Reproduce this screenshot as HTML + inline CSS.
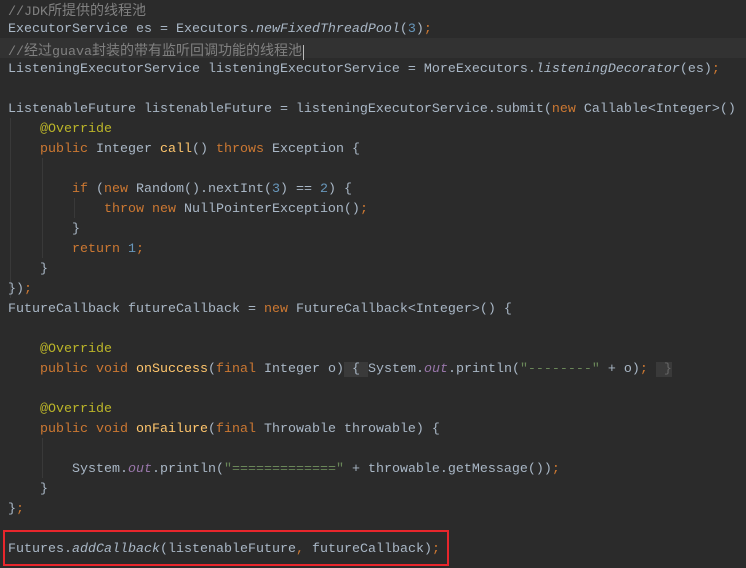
<!DOCTYPE html>
<html><head><meta charset="utf-8"><style>
html,body{margin:0;padding:0;width:746px;height:568px;overflow:hidden;background:#2b2b2b;}
.c{position:relative;width:746px;height:568px;font-family:"Liberation Mono","Noto Sans CJK SC",monospace;font-size:13.33px;color:#a9b7c6;}
.l{position:absolute;left:8px;height:20px;line-height:20px;white-space:pre;margin-top:2px}
.k{color:#cc7832}.cm{color:#808080}.n{color:#6897bb}.s{color:#6a8759}.a{color:#bbb529}.m{color:#ffc66d}.f{color:#9876aa;font-style:italic}.i{font-style:italic}
.cj{font-family:"Noto Sans CJK SC",sans-serif;font-size:14px;}
.g{position:absolute;width:1px;background:#393939}
.b{background:#3a3a3a}
</style></head><body><div class="c">
<div style="position:absolute;left:0;top:38px;width:746px;height:20px;background:#323232"></div>
<div class="g" style="left:10px;top:118px;height:180px"></div>
<div class="g" style="left:42px;top:158px;height:100px"></div>
<div class="g" style="left:74px;top:198px;height:20px"></div>
<div class="g" style="left:42px;top:438px;height:40px"></div>
<div class="l cm" style="top:-2px">//JDK<span class="cj">所提供的线程池</span></div>
<div class="l" style="top:18px">ExecutorService es = Executors.<span class="i">newFixedThreadPool</span>(<span class="n">3</span>)<span class="k">;</span></div>
<div class="l cm" style="top:38px">//<span class="cj">经过</span>guava<span class="cj">封装的带有监听回调功能的线程池</span><span style="border-left:1px solid #bbb;margin-left:1px"></span></div>
<div class="l" style="top:58px">ListeningExecutorService listeningExecutorService = MoreExecutors.<span class="i">listeningDecorator</span>(es)<span class="k">;</span></div>
<div class="l" style="top:98px">ListenableFuture listenableFuture = listeningExecutorService.submit(<span class="k">new </span>Callable&lt;Integer&gt;()</div>
<div class="l" style="top:118px">    <span class="a">@Override</span></div>
<div class="l" style="top:138px">    <span class="k">public </span>Integer <span class="m">call</span>() <span class="k">throws </span>Exception {</div>
<div class="l" style="top:178px">        <span class="k">if </span>(<span class="k">new </span>Random().nextInt(<span class="n">3</span>) == <span class="n">2</span>) {</div>
<div class="l" style="top:198px">            <span class="k">throw new </span>NullPointerException()<span class="k">;</span></div>
<div class="l" style="top:218px">        }</div>
<div class="l" style="top:238px">        <span class="k">return </span><span class="n">1</span><span class="k">;</span></div>
<div class="l" style="top:258px">    }</div>
<div class="l" style="top:278px">})<span class="k">;</span></div>
<div class="l" style="top:298px">FutureCallback futureCallback = <span class="k">new </span>FutureCallback&lt;Integer&gt;() {</div>
<div class="l" style="top:338px">    <span class="a">@Override</span></div>
<div class="l" style="top:358px">    <span class="k">public void </span><span class="m">onSuccess</span>(<span class="k">final </span>Integer o)<span class="b"> { </span>System.<span class="f">out</span>.println(<span class="s">"--------"</span> + o)<span class="k">;</span> <span class="b" style="color:#666"> }</span></div>
<div class="l" style="top:398px">    <span class="a">@Override</span></div>
<div class="l" style="top:418px">    <span class="k">public void </span><span class="m">onFailure</span>(<span class="k">final </span>Throwable throwable) {</div>
<div class="l" style="top:458px">        System.<span class="f">out</span>.println(<span class="s">"============="</span> + throwable.getMessage())<span class="k">;</span></div>
<div class="l" style="top:478px">    }</div>
<div class="l" style="top:498px">}<span class="k">;</span></div>
<div class="l" style="top:538px">Futures.<span class="i">addCallback</span>(listenableFuture<span class="k">, </span>futureCallback)<span class="k">;</span></div>
<div style="position:absolute;left:3px;top:530px;width:442px;height:32px;border:2px solid #e8262c"></div>
</div></body></html>
